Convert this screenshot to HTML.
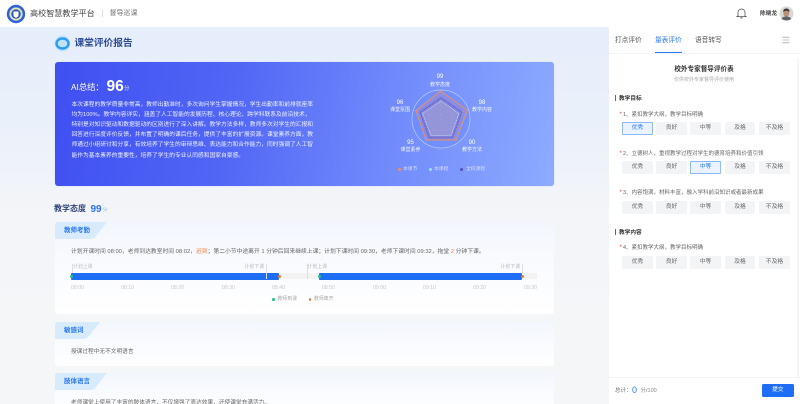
<!DOCTYPE html>
<html lang="zh"><head><meta charset="utf-8"><title>课堂评价报告</title>
<style>
html,body{margin:0;padding:0;width:800px;height:404px;overflow:hidden;background:#f5f6f8}
body{position:relative;font-family:"Liberation Sans","Noto Sans CJK SC",sans-serif;color:#555}
#r{position:absolute;left:0;top:0;width:800px;height:404px;overflow:hidden;filter:blur(.3px)}
div{position:absolute}
.t{position:absolute;white-space:nowrap;line-height:12px;height:12px;margin-top:1px}
.c{transform:translateX(-50%)}
.card{background:linear-gradient(180deg,#f3f6fd 0,#fbfcff 60%,#fff 100%);border-radius:3px;left:55px;width:499px}
.w{color:#fff;font-size:5.75px;opacity:.9}
.l{color:#fff;font-size:5px;opacity:.92}
.tm{font-size:5.2px;color:#c4c7cd;top:281px}
.b{background:#f3f4f6;color:#666;font-size:5.8px;text-align:center;line-height:13px;height:13px;border-radius:1.5px}
.on{background:#eaf3ff;color:#2a78ee;box-shadow:inset 0 0 0 .7px #6aa4f6}
.q{font-size:5.5px;color:#666;left:623px}
.st{color:#f0413e;font-size:6px;left:619.5px}
</style></head><body><div id="r">
<div style="left:0;top:27px;width:609px;height:377px;background:linear-gradient(180deg,#e6eefb 0,#eaf0fa 25%,#f4f5f8 50%,#f5f6f8 100%)"></div>

<!-- header -->
<div style="left:0;top:0;width:800px;height:27px;background:#fff"></div>
<svg style="position:absolute;left:6px;top:3.5px" width="20" height="20" viewBox="0 0 20 20"><circle cx="10" cy="10" r="9.2" fill="#2f62d8"/><circle cx="10" cy="10" r="6.6" fill="#e6e3b8"/><circle cx="10" cy="10" r="4.8" fill="#2f5fb8"/><path d="M7.5 7.5h5v3.5q0 2-2.5 2.7q-2.5-.7-2.5-2.7z" fill="#fff"/></svg>
<span class="t" style="left:30px;top:6.8px;font-size:8.1px;color:#444">高校智慧教学平台</span>
<div style="left:102px;top:10px;width:.6px;height:7px;background:#ddd"></div>
<span class="t" style="left:109.5px;top:6.8px;font-size:7px;color:#777">督导巡课</span>
<svg style="position:absolute;left:736px;top:7px" width="11" height="12" viewBox="0 0 11 12"><path d="M2 9V5.5a3.5 3.5 0 0 1 7 0V9l1 .6H1zM4.3 10.6q1.2 1 2.4 0" fill="none" stroke="#555" stroke-width=".8"/></svg>
<span class="t" style="left:760px;top:6.8px;font-size:5.7px;color:#444;font-weight:bold">陈晓龙</span>
<svg style="position:absolute;left:779px;top:6px" width="15" height="15" viewBox="0 0 15 15"><circle cx="7.5" cy="7.5" r="7" fill="#d8d8d6"/><ellipse cx="7.3" cy="7" rx="3" ry="3.7" fill="#b98f78"/><path d="M4.2 6q0-3.5 3.2-3.5T10.500 6q-1.500-1.500-3.200-1.300T4.200 6z" fill="#3a3633"/><path d="M2.500 13q1-2.500 4.800-2.500t5 2.500q-2.500 1.700-5 1.500t-4.800-1.500z" fill="#5c6068"/></svg>

<!-- report title -->
<svg style="position:absolute;left:54px;top:35px" width="17" height="17" viewBox="0 0 17 17"><circle cx="8.5" cy="8.5" r="8" fill="#bfe3fb"/><ellipse cx="8.5" cy="8.5" rx="6" ry="5" fill="none" stroke="#2f9cf0" stroke-width="2.4"/></svg>
<span class="t" style="left:74.5px;top:37px;font-size:9.7px;font-weight:bold;color:#2d4a96">课堂评价报告</span>

<!-- hero -->
<div style="left:55px;top:62px;width:499px;height:124px;border-radius:3px;background:linear-gradient(100deg,#3f4ff2 0,#5166f5 35%,#6f88fb 65%,#8dabff 100%);box-shadow:0 0 0 .7px #dfe8fb"></div>
<span class="t" style="left:71px;top:80px;font-size:8.3px;color:#fff">AI总结：</span>
<span class="t" style="left:106.5px;top:79px;font-size:15.5px;font-weight:bold;color:#fff;line-height:14px;height:14px">96</span>
<span class="t" style="left:124px;top:82px;font-size:5.4px;color:#dde3ff">分</span>
<span class="t w" style="left:71.5px;top:97.5px">本次课程的教学质量非常高，教师出勤准时，多次询问学生掌握情况，学生出勤率和前排就座率</span>
<span class="t w" style="left:71.5px;top:107.5px">均为100%。教学内容详实，涵盖了人工智能的发展历程、核心理论、跨学科联系及前沿技术，</span>
<span class="t w" style="left:71.5px;top:117.5px">特别是对知识驱动和数据驱动的区别进行了深入讲解。教学方法多样，教师多次对学生的汇报和</span>
<span class="t w" style="left:71.5px;top:127.5px">回答进行深度评价反馈，并布置了明确的课后任务，提供了丰富的扩展资源。课堂素养方面，教</span>
<span class="t w" style="left:71.5px;top:138px">师通过小组研讨和分享，有效培养了学生的审辩思维、表达能力和合作能力，同时强调了人工智</span>
<span class="t w" style="left:71.5px;top:148.5px">能作为基本素养的重要性，培养了学生的专业认同感和国家自豪感。</span>

<!-- radar -->
<svg style="position:absolute;left:400px;top:80px" width="82" height="80" viewBox="400 80 82 80">
<circle cx="441" cy="119" r="29" fill="#6b8cff" fill-opacity=".55" stroke="#b6ccff" stroke-width=".7"/>
<g stroke="#fff" stroke-opacity=".3" stroke-width=".4" fill="none">
<path d="M441 119L441 91M441 119L467.5 110M441 119L457 141M441 119L425 141M441 119L414.5 110"/>
<path d="M441 105L454 114.5L449 130L433 130L428 114.5Z"/>
</g>
<path d="M440.5 91L467.3 110L456 140L426 140L416 110.7Z" fill="#9b8cd0" fill-opacity=".55" stroke="#ee8f63" stroke-width="1"/>
<path d="M441 97.5L462 112L452.5 138L429 138L420 112Z" fill="#7368c8" fill-opacity=".35" stroke="#5a52b8" stroke-width=".8" stroke-dasharray="1 .6"/>
<path d="M441 101L459 113.5L451 135.5L431 135.5L422.5 113.5Z" fill="#b9bdd8" fill-opacity=".35" stroke="#c6e2f5" stroke-width=".8" stroke-dasharray="1 .6"/>
</svg>
<span class="t c" style="left:440px;top:70px;font-size:6px;color:#fff">99</span>
<span class="t c l" style="left:440px;top:77.5px">教学态度</span>
<span class="t c" style="left:482px;top:96px;font-size:6px;color:#fff">98</span>
<span class="t c l" style="left:482px;top:103px">教学内容</span>
<span class="t c" style="left:472px;top:136px;font-size:6px;color:#fff">90</span>
<span class="t c l" style="left:472px;top:143px">教学方法</span>
<span class="t c" style="left:410.5px;top:136px;font-size:6px;color:#fff">95</span>
<span class="t c l" style="left:410.5px;top:143px">课堂素养</span>
<span class="t c" style="left:400px;top:96px;font-size:6px;color:#fff">96</span>
<span class="t c l" style="left:400px;top:103px">课堂氛围</span>
<div style="left:398px;top:168px;width:2.5px;height:2.5px;border-radius:50%;background:#ee8f63"></div>
<span class="t" style="left:403px;top:162.5px;font-size:4.8px;color:#d5dcff">本课节</span>
<div style="left:429px;top:168px;width:2.5px;height:2.5px;border-radius:50%;background:#8fe0f0"></div>
<span class="t" style="left:434px;top:162.5px;font-size:4.8px;color:#d5dcff">本课程</span>
<div style="left:460px;top:168px;width:2.5px;height:2.5px;border-radius:50%;background:#5a52b8"></div>
<span class="t" style="left:466px;top:162.5px;font-size:4.8px;color:#d5dcff">全校课程</span>

<!-- attitude -->
<span class="t" style="left:54px;top:202px;font-size:8px;font-weight:bold;color:#2f4478">教学态度</span>
<span class="t" style="left:90.5px;top:203px;font-size:10px;font-weight:bold;color:#2b74ee">99</span>
<span class="t" style="left:102.5px;top:203.5px;font-size:4.8px;color:#8db7f2">分</span>

<!-- card 1 -->
<div class="card" style="top:222px;height:92px"></div>
<svg style="position:absolute;left:55px;top:222px" width="52" height="17"><path d="M0 17V3Q0 0 3 0H52L41 14Q39 17 35 17Z" fill="#d8ebfd"/></svg>
<span class="t" style="left:64px;top:224px;font-size:6.5px;font-weight:bold;color:#2a78ee">教师考勤</span>
<span class="t" style="left:71px;top:245px;font-size:5.8px;color:#666">计划开课时间 08:00，老师到达教室时间 08:02，<span style="color:#f2773a">迟到</span>；第二小节中途离开 1 分钟后回来继续上课；计划下课时间 09:30，老师下课时间 09:32，拖堂 <span style="color:#f2773a">2</span> 分钟下课。</span>

<div style="left:71px;top:273px;width:466px;height:6px;background:#f3f3f4"></div>
<div style="left:71px;top:272.5px;width:208px;height:7px;background:#1e6ef5;border-radius:1px"></div>
<div style="left:319px;top:272.5px;width:203px;height:7px;background:#1e6ef5;border-radius:1px"></div>
<div style="left:71.5px;top:264px;width:.5px;height:9px;background:#ddd"></div>
<div style="left:265.5px;top:264px;width:.5px;height:15px;background:#ddd"></div>
<div style="left:306.5px;top:264px;width:.5px;height:15px;background:#ddd"></div>
<div style="left:522px;top:264px;width:.5px;height:9px;background:#ddd"></div>
<span class="t" style="left:73px;top:260.5px;font-size:4.9px;color:#bbb">计划上课</span>
<span class="t" style="left:244.5px;top:260.5px;font-size:4.9px;color:#bbb">计划下课</span>
<span class="t" style="left:307.5px;top:260.5px;font-size:4.9px;color:#bbb">计划上课</span>
<span class="t" style="left:500.5px;top:260.5px;font-size:4.9px;color:#bbb">计划下课</span>
<div style="left:69.5px;top:274.5px;width:3px;height:3px;border-radius:50%;background:#1fc98a"></div>
<div style="left:277.5px;top:274.5px;width:3px;height:3px;border-radius:50%;background:#f2773a"></div>
<div style="left:317.5px;top:274.5px;width:3px;height:3px;border-radius:50%;background:#1fc98a"></div>
<div style="left:520.5px;top:274.5px;width:3px;height:3px;border-radius:50%;background:#f2773a"></div>
<span class="t tm" style="left:71px">08:00</span>
<span class="t tm" style="left:121px">08:10</span>
<span class="t tm" style="left:171px">08:20</span>
<span class="t tm" style="left:222px">08:30</span>
<span class="t tm" style="left:272px">08:40</span>
<span class="t tm" style="left:322px">08:50</span>
<span class="t tm" style="left:373px">09:00</span>
<span class="t tm" style="left:423px">09:10</span>
<span class="t tm" style="left:473px">09:20</span>
<span class="t tm" style="left:524px">09:30</span>
<div style="left:272px;top:298px;width:2.5px;height:2.5px;border-radius:50%;background:#1fc98a"></div>
<span class="t" style="left:277.5px;top:293px;font-size:4.9px;color:#aaa">教师到课</span>
<div style="left:308.5px;top:298px;width:2.5px;height:2.5px;border-radius:50%;background:#f2773a"></div>
<span class="t" style="left:314px;top:293px;font-size:4.9px;color:#aaa">教师离开</span>

<!-- card 2 -->
<div class="card" style="top:322px;height:44px"></div>
<svg style="position:absolute;left:55px;top:322px" width="45" height="17"><path d="M0 17V3Q0 0 3 0H45L34 14Q32 17 28 17Z" fill="#d8ebfd"/></svg>
<span class="t" style="left:64px;top:324px;font-size:6.5px;font-weight:bold;color:#2a78ee">敏感词</span>
<span class="t" style="left:71px;top:345px;font-size:5.7px;color:#666">授课过程中无不文明语言</span>

<!-- card 3 -->
<div class="card" style="top:373px;height:40px"></div>
<svg style="position:absolute;left:55px;top:373px" width="52" height="17"><path d="M0 17V3Q0 0 3 0H52L41 14Q39 17 35 17Z" fill="#d8ebfd"/></svg>
<span class="t" style="left:64px;top:375px;font-size:6.5px;font-weight:bold;color:#2a78ee">肢体语言</span>
<span class="t" style="left:71px;top:396px;font-size:5.7px;color:#666">老师课堂上使用了丰富的肢体语言，不仅增强了表达效果，还使课堂充满活力。</span>

<!-- right panel -->
<div style="left:609px;top:27px;width:191px;height:377px;background:#fff"></div>
<div style="left:609px;top:53px;width:191px;height:.6px;background:#f2f3f5"></div>
<span class="t" style="left:615px;top:34px;font-size:6.7px;color:#555">打点评价</span>
<span class="t" style="left:655px;top:34px;font-size:6.7px;color:#2a78ee">量表评价</span>
<span class="t" style="left:695px;top:34px;font-size:6.7px;color:#555">语音转写</span>
<div style="left:655px;top:52px;width:27px;height:1px;background:#2a78ee"></div>
<svg style="position:absolute;left:782px;top:36px" width="9" height="8"><path d="M.5 1.2h7M.5 4h7M.5 6.8h7" stroke="#888" stroke-width=".6"/></svg>
<div style="left:797px;top:57px;width:2px;height:320px;background:#f6f6f7"></div>

<span class="t c" style="left:704px;top:63px;font-size:6.6px;font-weight:bold;color:#333">校外专家督导评价表</span>
<span class="t c" style="left:704px;top:73px;font-size:5px;color:#aaa">仅供校外专家督导评价使用</span>

<div style="left:615px;top:95px;width:1px;height:6px;background:#1e6ef5"></div>
<span class="t" style="left:619px;top:92px;font-size:5.7px;font-weight:bold;color:#333">教学目标</span>
<span class="t st" style="top:107.5px">*</span>
<span class="t q" style="top:108px">1、紧扣教学大纲，教学目标明确</span>
<div class="b on" style="left:622px;top:122px;width:31px">优秀</div>
<div class="b" style="left:656px;top:122px;width:31px">良好</div>
<div class="b" style="left:690px;top:122px;width:31px">中等</div>
<div class="b" style="left:725px;top:122px;width:30px">及格</div>
<div class="b" style="left:759px;top:122px;width:31px">不及格</div>

<span class="t st" style="top:146.5px">*</span>
<span class="t q" style="top:147px">2、立德树人，重视教学过程对学生的德育培养和价值引领</span>
<div class="b" style="left:622px;top:161px;width:31px">优秀</div>
<div class="b" style="left:656px;top:161px;width:31px">良好</div>
<div class="b on" style="left:690px;top:161px;width:31px">中等</div>
<div class="b" style="left:725px;top:161px;width:30px">及格</div>
<div class="b" style="left:759px;top:161px;width:31px">不及格</div>

<span class="t st" style="top:185.5px">*</span>
<span class="t q" style="top:186px">3、内容饱满，材料丰富，融入学科前沿知识或者最新成果</span>
<div class="b" style="left:622px;top:201px;width:31px">优秀</div>
<div class="b" style="left:656px;top:201px;width:31px">良好</div>
<div class="b" style="left:690px;top:201px;width:31px">中等</div>
<div class="b" style="left:725px;top:201px;width:30px">及格</div>
<div class="b" style="left:759px;top:201px;width:31px">不及格</div>

<div style="left:615px;top:229px;width:1px;height:6px;background:#1e6ef5"></div>
<span class="t" style="left:619px;top:226px;font-size:5.7px;font-weight:bold;color:#333">教学内容</span>
<span class="t st" style="top:240.5px">*</span>
<span class="t q" style="top:241px">4、紧扣教学大纲，教学目标明确</span>
<div class="b" style="left:622px;top:256px;width:31px">优秀</div>
<div class="b" style="left:656px;top:256px;width:31px">良好</div>
<div class="b" style="left:690px;top:256px;width:31px">中等</div>
<div class="b" style="left:725px;top:256px;width:30px">及格</div>
<div class="b" style="left:759px;top:256px;width:31px">不及格</div>

<div style="left:609px;top:377px;width:191px;height:.6px;background:#f2f3f5"></div>
<span class="t" style="left:615px;top:384px;font-size:5.5px;color:#666">总计：</span>
<span class="t" style="left:632px;top:383px;font-size:9px;color:#2a78ee">0</span>
<span class="t" style="left:640.5px;top:384px;font-size:5.5px;color:#888">分/100</span>
<div style="left:762px;top:384px;width:31.5px;height:13px;background:#1e6ef5;border-radius:1.5px;color:#fff;font-size:5.7px;line-height:13px;text-align:center">提交</div>
</div></body></html>
